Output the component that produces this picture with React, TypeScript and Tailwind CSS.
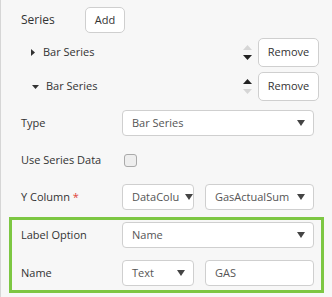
const font = { fontFamily: '"Open Sans", "Liberation Sans", sans-serif' };

function Caret() {
  return (
    <svg width="8" height="6" viewBox="0 0 8 6" className="shrink-0">
      <path d="M0 0h8L4 6z" fill="#444" />
    </svg>
  );
}

function Select({ value, className }: { value: string; className: string }) {
  return (
    <div
      className={`h-[26px] flex items-center justify-between pl-[9px] pr-[8px] bg-white border border-[#cfcfcf] rounded-[4px] text-[11px] text-[#555] ${className}`}
    >
      <span className="whitespace-nowrap mr-[6px]">{value}</span>
      <Caret />
    </div>
  );
}

function Arrows({ up, down }: { up: string; down: string }) {
  return (
    <div className="flex flex-col gap-[5px] items-center w-[10px] mr-[6px]">
      <svg width="9" height="5" viewBox="0 0 9 5">
        <path d="M0 5h9L4.5 0z" fill={up} />
      </svg>
      <svg width="9" height="5" viewBox="0 0 9 5">
        <path d="M0 0h9L4.5 5z" fill={down} />
      </svg>
    </div>
  );
}

function Button({ label, className }: { label: string; className: string }) {
  return (
    <div
      className={`flex items-center justify-center bg-white border border-[#cfcfcf] rounded-[5px] text-[11px] text-[#333] ${className}`}
    >
      {label}
    </div>
  );
}

function Row({ label, children, required }: { label: string; children: React.ReactNode; required?: boolean }) {
  return (
    <div className="flex items-center h-[26px]">
      <div className="w-[101px] text-[11px] text-[#333]">
        {label}
        {required && <span className="text-[#e0433a]"> *</span>}
      </div>
      {children}
    </div>
  );
}

export default function App() {
  return (
    <div
      className="w-[332px] h-[297px] bg-[#f7f7f7] border-l border-[#d6d6d6] pl-[20px] pr-[18px] pt-[7px] overflow-hidden"
      style={font}
    >
      <div className="flex items-center h-[26px]">
        <span className="text-[12px] text-[#333] w-[64px]">Series</span>
        <Button label="Add" className="w-[40px] h-[26px]" />
      </div>

      <div className="flex items-center h-[29px] mt-[5px] -mr-[5px]">
        <div className="flex items-center pl-[10px] flex-1">
          <svg width="4" height="7" viewBox="0 0 4 7" className="mr-[8px]">
            <path d="M0 0v7l4-3.5z" fill="#333" />
          </svg>
          <span className="text-[11px] text-[#333]">Bar Series</span>
        </div>
        <Arrows up="#d6d6d6" down="#222" />
        <Button label="Remove" className="w-[61px] h-[29px]" />
      </div>

      <div className="flex items-center h-[29px] mt-[5px] -mr-[5px]">
        <div className="flex items-center pl-[11px] flex-1">
          <svg width="7" height="4" viewBox="0 0 7 4" className="mr-[7px]">
            <path d="M0 0h7L3.5 4z" fill="#333" />
          </svg>
          <span className="text-[11px] text-[#333]">Bar Series</span>
        </div>
        <Arrows up="#222" down="#d6d6d6" />
        <Button label="Remove" className="w-[61px] h-[29px]" />
      </div>

      <div className="flex flex-col gap-[11px] mt-[9px]">
        <Row label="Type">
          <Select value="Bar Series" className="w-[192px]" />
        </Row>
        <Row label="Use Series Data">
          <div className="w-[13px] h-[13px] ml-[2px] rounded-[3px] border border-[#aaa] bg-[#eee]" />
        </Row>
        <Row label="Y Column" required>
          <Select value="DataColu" className="w-[72px]" />
          <Select value="GasActualSum" className="w-[109px] ml-[11px]" />
        </Row>
      </div>

      <div className="-ml-[12px] -mr-[10px] mt-[7px] border-[3px] border-[#7dc743] pl-[9px] pr-[7px] pt-[2px] pb-[4px] flex flex-col gap-[12px]">
        <Row label="Label Option">
          <Select value="Name" className="w-[192px]" />
        </Row>
        <Row label="Name">
          <Select value="Text" className="w-[72px]" />
          <div className="w-[109px] ml-[11px] h-[26px] flex items-center pl-[9px] bg-white border border-[#cfcfcf] rounded-[4px] text-[11px] text-[#555]">
            GAS
          </div>
        </Row>
      </div>
    </div>
  );
}
